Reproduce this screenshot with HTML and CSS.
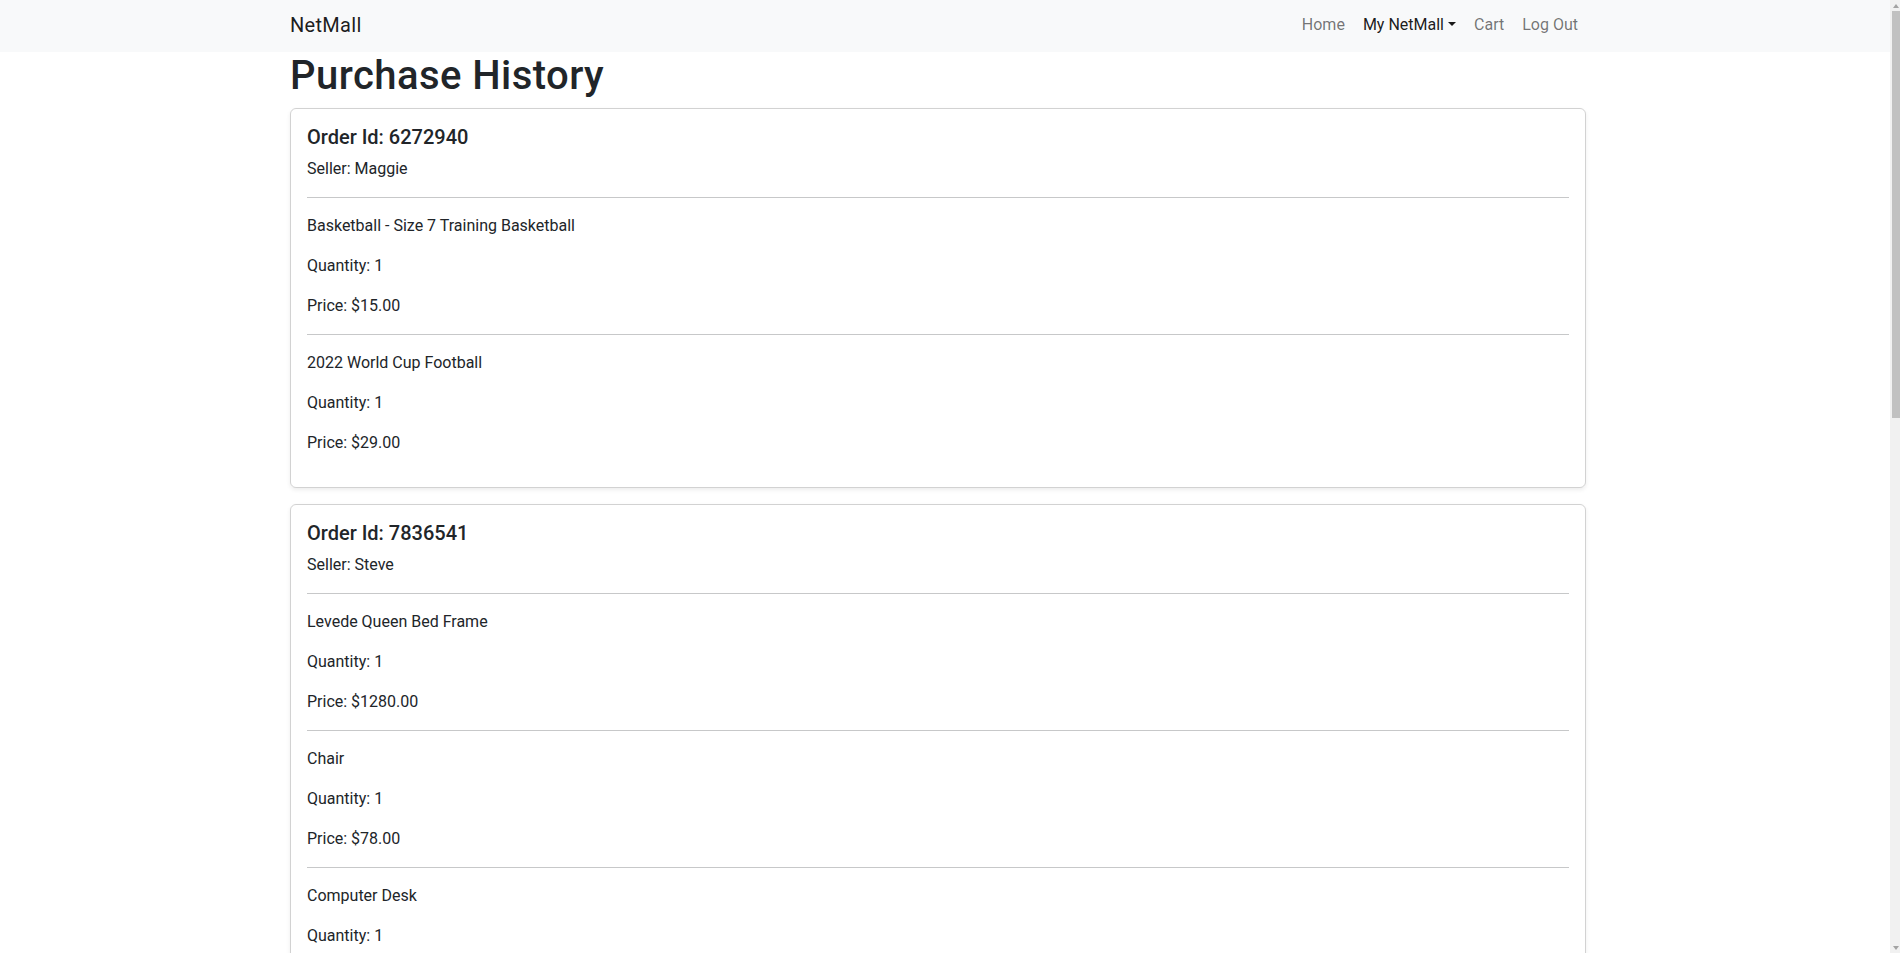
FILE: index.html
```html
<!DOCTYPE html>
<html lang="en">
<head>
<meta charset="utf-8">
<title>Purchase History - NetMall</title>
<link rel="stylesheet" href="styles.css">
</head>
<body>
<nav class="navbar">
  <div class="container navbar-inner">
    <a class="brand" href="#">NetMall</a>
    <ul class="nav">
      <li><a class="nav-link" href="#">Home</a></li>
      <li><a class="nav-link active dropdown-toggle" href="#">My NetMall</a></li>
      <li><a class="nav-link" href="#">Cart</a></li>
      <li><a class="nav-link" href="#">Log Out</a></li>
    </ul>
  </div>
</nav>

<main class="container">
  <h1 class="page-title">Purchase History</h1>

  <section class="card">
    <h5 class="card-title">Order Id: 6272940</h5>
    <p>Seller: Maggie</p>
    <hr>
    <p>Basketball - Size 7 Training Basketball</p>
    <p>Quantity: 1</p>
    <p>Price: $15.00</p>
    <hr>
    <p>2022 World Cup Football</p>
    <p>Quantity: 1</p>
    <p>Price: $29.00</p>
  </section>

  <section class="card">
    <h5 class="card-title">Order Id: 7836541</h5>
    <p>Seller: Steve</p>
    <hr>
    <p>Levede Queen Bed Frame</p>
    <p>Quantity: 1</p>
    <p>Price: $1280.00</p>
    <hr>
    <p>Chair</p>
    <p>Quantity: 1</p>
    <p>Price: $78.00</p>
    <hr>
    <p>Computer Desk</p>
    <p>Quantity: 1</p>
  </section>
</main>

<div class="scrollbar" aria-hidden="true">
  <span class="sb-btn sb-up"></span>
  <span class="sb-thumb"></span>
  <span class="sb-btn sb-down"></span>
</div>
</body>
</html>
```
FILE: styles.css
```css
* {
  box-sizing: border-box;
}

html, body {
  overflow: hidden;
}

body {
  margin: 0;
  font-family: Roboto, "Liberation Sans", sans-serif;
  font-size: 16px;
  line-height: 1.5;
  color: #212529;
  background: #fff;
}

.container {
  width: 1296px;
  margin-left: calc((100% - 1296px) / 2 - 12px);
}

/* Navbar */
.navbar {
  background: #f8f9fa;
  height: 52px;
}
.navbar-inner {
  height: 100%;
  display: flex;
  align-items: center;
  justify-content: space-between;
}
.brand {
  font-size: 20px;
  line-height: 30px;
  color: rgba(0, 0, 0, 0.9);
  text-decoration: none;
  margin-top: -2px;
  letter-spacing: 0.3px;
}
.nav {
  list-style: none;
  margin: -2px 0 0;
  padding: 0;
  display: flex;
}
.nav-link {
  display: block;
  padding: 8px 9px;
  color: rgba(0, 0, 0, 0.55);
  text-decoration: none;
}
.nav li:last-child .nav-link {
  padding-right: 8px;
}
.nav-link.active {
  color: rgba(0, 0, 0, 0.9);
}
.dropdown-toggle::after {
  content: "";
  display: inline-block;
  margin-left: 0.255em;
  vertical-align: 0.255em;
  border-top: 0.3em solid;
  border-right: 0.3em solid transparent;
  border-left: 0.3em solid transparent;
  border-bottom: 0;
}

/* Page */
.page-title {
  font-size: 40px;
  font-weight: 500;
  line-height: 1.2;
  letter-spacing: 0.45px;
  margin: 0 0 8px;
}

.card {
  border: 1px solid rgba(0, 0, 0, 0.175);
  border-radius: 6px;
  box-shadow: 0 2px 4px rgba(0, 0, 0, 0.075);
  padding: 16px;
  margin-bottom: 16px;
}
.card-title {
  font-size: 20px;
  font-weight: 500;
  line-height: 1.2;
  margin: 0 0 8px;
}
.card p {
  margin: 0 0 16px;
}
.card hr {
  margin: 16px 0;
  border: 0;
  border-top: 1px solid #212529;
  opacity: 0.25;
}

/* Browser scrollbar (drawn over the page's right edge) */
.scrollbar {
  position: fixed;
  top: 0;
  right: 0;
  width: 10px;
  height: 100vh;
  background: #f1f1f1;
  display: flex;
  flex-direction: column;
}
.sb-btn {
  height: 11px;
  display: flex;
  justify-content: center;
  align-items: center;
  padding-left: 2px;
}
.sb-up::before,
.sb-down::before {
  content: "";
  border-left: 3px solid transparent;
  border-right: 3px solid transparent;
}
.sb-up::before {
  border-bottom: 4px solid #a3a3a3;
}
.sb-down::before {
  border-top: 4px solid #a3a3a3;
}
.sb-thumb {
  height: 407px;
  margin-left: 2px;
  background: #c1c1c1;
}
.sb-down {
  margin-top: auto;
}
```
